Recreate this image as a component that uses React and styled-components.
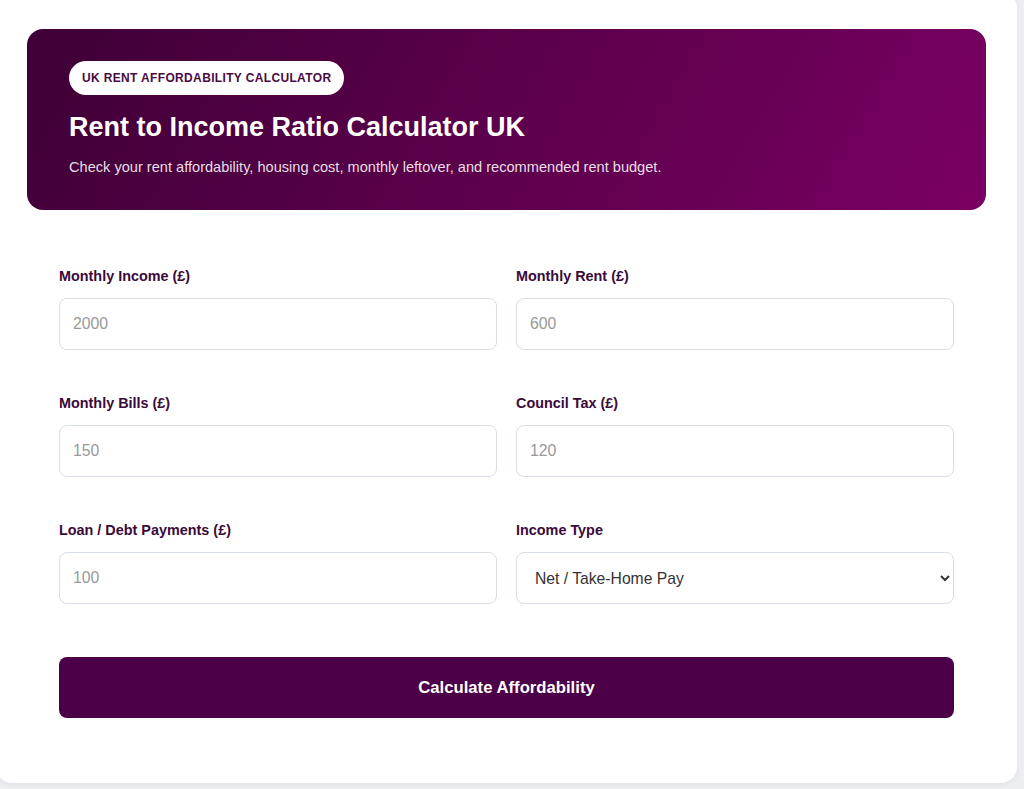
import React from "react";
import styled, { createGlobalStyle } from "styled-components";

const GlobalStyle = createGlobalStyle`
  * { box-sizing: border-box; }
  body {
    margin: 0;
    background: #eceef1;
    font-family: "Liberation Sans", Arial, sans-serif;
  }
`;

const Card = styled.div`
  margin: -8px 7px 7px -4px;
  background: #ffffff;
  border-radius: 16px;
  padding: 37px 31px 65px;
  box-shadow: 0 2px 6px rgba(0, 0, 0, 0.05);
`;

const Hero = styled.header`
  background: linear-gradient(120deg, #3e0036 0%, #5c004c 50%, #7a0062 100%);
  border-radius: 16px;
  padding: 32px 42px 33px;
  color: #fff;
`;

const Badge = styled.span`
  display: inline-block;
  background: #fff;
  color: #4a0a45;
  font-size: 12px;
  font-weight: 700;
  letter-spacing: 0.35px;
  padding: 10px 13px;
  border-radius: 999px;
  line-height: 14px;
`;

const Title = styled.h1`
  margin: 16px 0 0;
  font-size: 27px;
  line-height: 32px;
  font-weight: 700;
`;

const Subtitle = styled.p`
  margin: 15px 0 0;
  font-size: 14.6px;
  line-height: 19px;
  color: rgba(255, 255, 255, 0.88);
`;

const Form = styled.form`
  padding: 58px 32px 0;
`;

const Grid = styled.div`
  display: grid;
  grid-template-columns: 1fr 1fr;
  column-gap: 19px;
  row-gap: 45px;
`;

const Field = styled.div`
  display: flex;
  flex-direction: column;
`;

const Label = styled.label`
  font-size: 14.4px;
  font-weight: 700;
  color: #3a0a3a;
  line-height: 17px;
  margin-bottom: 13px;
`;

const Input = styled.input`
  height: 52px;
  border: 1px solid #d8dee8;
  border-radius: 8px;
  padding: 0 13px;
  font-size: 15.8px;
  font-family: inherit;
  color: #333;
  outline: none;
  &::placeholder { color: #999; }
`;

const Select = styled.select`
  height: 52px;
  border: 1px solid #d8dee8;
  border-radius: 8px;
  padding: 0 14px;
  font-size: 15.7px;
  font-family: inherit;
  color: #333;
  background: #fff;
  outline: none;
`;

const Button = styled.button`
  display: block;
  width: 100%;
  margin-top: 53px;
  height: 61px;
  border: none;
  border-radius: 8px;
  background: #4b0047;
  color: #fff;
  font-family: inherit;
  font-size: 16.7px;
  font-weight: 700;
  cursor: pointer;
`;

const fields = [
  { label: "Monthly Income (£)", placeholder: "2000" },
  { label: "Monthly Rent (£)", placeholder: "600" },
  { label: "Monthly Bills (£)", placeholder: "150" },
  { label: "Council Tax (£)", placeholder: "120" },
  { label: "Loan / Debt Payments (£)", placeholder: "100" },
];

export default function App() {
  return (
    <>
      <GlobalStyle />
      <Card>
        <Hero>
          <Badge>UK RENT AFFORDABILITY CALCULATOR</Badge>
          <Title>Rent to Income Ratio Calculator UK</Title>
          <Subtitle>
            Check your rent affordability, housing cost, monthly leftover, and recommended rent budget.
          </Subtitle>
        </Hero>
        <Form onSubmit={(e) => e.preventDefault()}>
          <Grid>
            {fields.map((f) => (
              <Field key={f.label}>
                <Label>{f.label}</Label>
                <Input type="number" placeholder={f.placeholder} />
              </Field>
            ))}
            <Field>
              <Label>Income Type</Label>
              <Select defaultValue="net">
                <option value="net">Net / Take-Home Pay</option>
                <option value="gross">Gross Pay</option>
              </Select>
            </Field>
          </Grid>
          <Button type="submit">Calculate Affordability</Button>
        </Form>
      </Card>
    </>
  );
}
